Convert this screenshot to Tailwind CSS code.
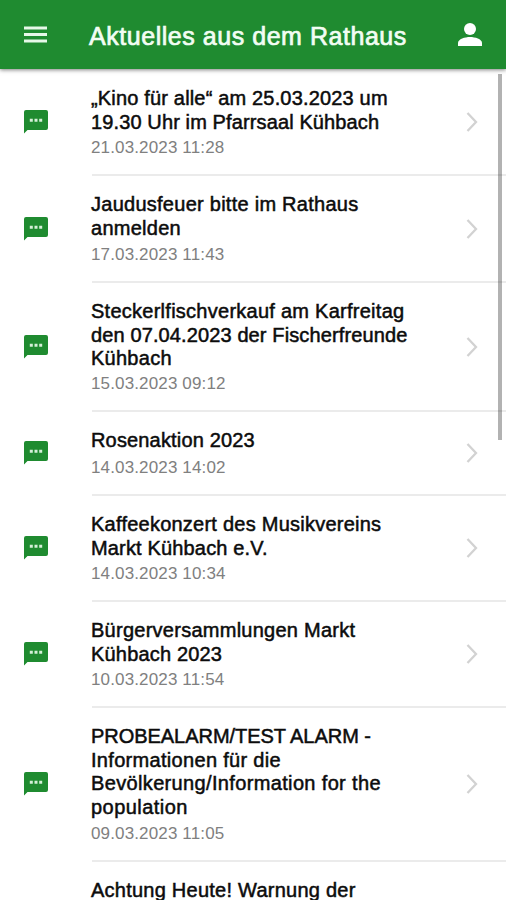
<!DOCTYPE html>
<html lang="de">
<head>
  <meta charset="utf-8"/>
  <meta content="width=device-width, initial-scale=1" name="viewport"/>
  <title>Aktuelles aus dem Rathaus</title>
  <script src="https://cdn.jsdelivr.net/npm/@tailwindcss/browser@4"></script>
</head>
<body class="relative flex h-screen flex-col overflow-hidden bg-white font-['Liberation_Sans',Arial,sans-serif]">
  <!-- Header -->
  <header class="relative z-10 flex h-[69px] shrink-0 items-center bg-[#1f8b30] px-6 text-white shadow-[0_1px_4px_rgba(0,0,0,0.5)]">
    <svg class="h-[17px] w-[23px] text-[#e6f8e8]" viewBox="0 0 23 17" fill="currentColor"><path d="M0 .5h23v3H0zM0 7h23v3H0zM0 13.500h23v3H0z"/></svg>
    <h1 class="mt-[3px] ml-[42px] whitespace-nowrap text-[25px] leading-8 tracking-[0.54px] text-[#f2fdf3] [-webkit-text-stroke:0.7px_#f2fdf3]">Aktuelles aus dem Rathaus</h1>
    <svg class="ml-auto h-[23px] w-6" viewBox="0 0 24 23" fill="currentColor"><circle cx="12" cy="6" r="6"/><path d="M0 23v-3c0-4 7-6 12-6s12 2 12 6v3z"/></svg>
  </header>

  <!-- News list -->
  <main id="newsList" class="min-h-0 flex-1 overflow-hidden pt-px"></main>

  <!-- Scroll indicator -->
  <div class="absolute top-[74px] right-[4px] h-[366px] w-[4px] bg-black/30"></div>

  <script>
    // lines: [text, letter spacing in px]
    const news = [
      { height: 106, date: '21.03.2023 11:28', lines: [['„Kino für alle“ am 25.03.2023 um', 0.17], ['19.30 Uhr im Pfarrsaal Kühbach', 0.12]] },
      { height: 107, date: '17.03.2023 11:43', lines: [['Jaudusfeuer bitte im Rathaus', 0.26], ['anmelden', 0.26]] },
      { height: 129, date: '15.03.2023 09:12', lines: [['Steckerlfischverkauf am Karfreitag', 0.26], ['den 07.04.2023 der Fischerfreunde', 0.12], ['Kühbach', 0.26]] },
      { height: 84, date: '14.03.2023 14:02', lines: [['Rosenaktion 2023', 0.16]] },
      { height: 106, date: '14.03.2023 10:34', lines: [['Kaffeekonzert des Musikvereins', 0.24], ['Markt Kühbach e.V.', 0.16]] },
      { height: 106, date: '10.03.2023 11:54', lines: [['Bürgerversammlungen Markt', 0.26], ['Kühbach 2023', 0.18]] },
      { height: 154, date: '09.03.2023 11:05', lines: [['PROBEALARM/TEST ALARM -', -0.04], ['Informationen für die', 0.31], ['Bevölkerung/Information for the', 0.35], ['population', 0.45]] }
    ];

    const rows = news.map(item => `
      <article class="flex items-center pl-6" style="height:${item.height}px">
        <svg class="mb-0.5 h-6 w-6 shrink-0" viewBox="0 0 24 24">
          <path d="M2 0h20a2 2 0 0 1 2 2v16a2 2 0 0 1-2 2H3.500L0 23.500V2a2 2 0 0 1 2-2z" fill="#1f8b30"/>
          <path d="M5.800 8.700h3v3h-3zM10.500 8.700h3v3h-3zM15.200 8.700h3v3h-3z" fill="#d5f0d8"/>
        </svg>
        <div class="ml-11 flex h-full flex-1 items-center border-b-2 border-[#ebebeb]">
          <div class="-ml-px flex h-full flex-1 flex-col justify-between pt-[17px] pb-4">
            <h2 class="whitespace-nowrap text-[20px] leading-[23.700px] text-[#0c0c0c] [-webkit-text-stroke:0.5px_#0c0c0c]">${item.lines.map(([text, spacing]) => `<span class="block" style="letter-spacing:${spacing}px">${text}</span>`).join('')}</h2>
            <p class="text-[17px] leading-5 tracking-[0.14px] text-[#808080]">${item.date}</p>
          </div>
          <svg class="mr-7 h-5 w-3 shrink-0" viewBox="0 0 12 20" fill="none" stroke="#d2d2d2" stroke-width="2.300"><path d="M1.500 1l8.500 9-8.500 9"/></svg>
        </div>
      </article>
    `).join('');

    const nextRow = `
      <article class="pt-[17px] pl-[91px]">
        <h2 class="whitespace-nowrap text-[20px] leading-[23.700px] tracking-[0.24px] text-[#0c0c0c] [-webkit-text-stroke:0.5px_#0c0c0c]">Achtung Heute! Warnung der</h2>
      </article>
    `;

    document.getElementById('newsList').innerHTML = rows + nextRow;
  </script>
</body>
</html>
